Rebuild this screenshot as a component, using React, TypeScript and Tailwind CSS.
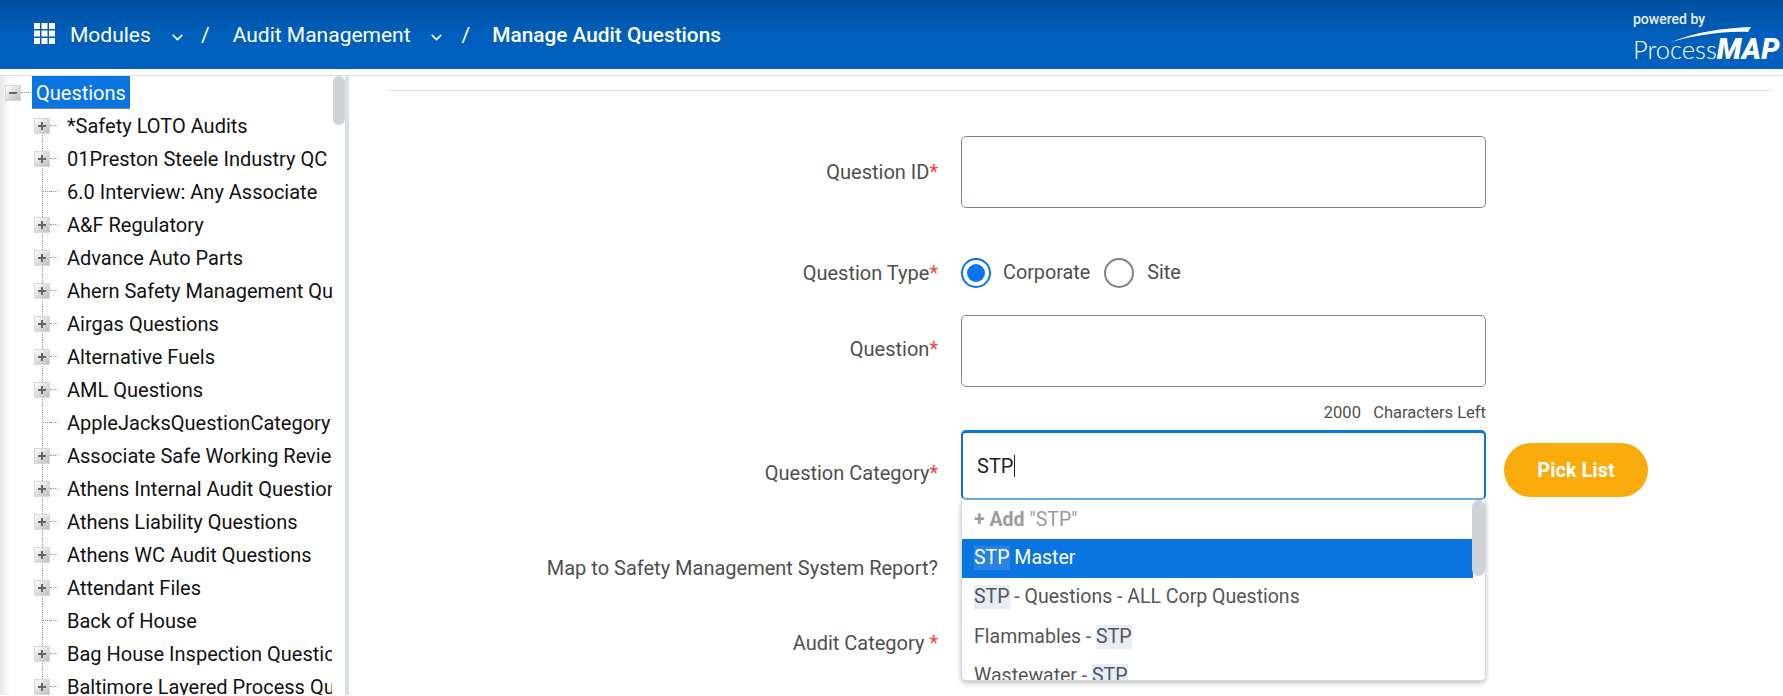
import React from "react";
import { ChevronDown } from "lucide-react";

const tree: [string, boolean][] = [
  ["*Safety LOTO Audits", true],
  ["01Preston Steele Industry QC", true],
  ["6.0 Interview: Any Associate", false],
  ["A&F Regulatory", true],
  ["Advance Auto Parts", true],
  ["Ahern Safety Management Questions", true],
  ["Airgas Questions", true],
  ["Alternative Fuels", true],
  ["AML Questions", true],
  ["AppleJacksQuestionCategory", false],
  ["Associate Safe Working Review", true],
  ["Athens Internal Audit Questions", true],
  ["Athens Liability Questions", true],
  ["Athens WC Audit Questions", true],
  ["Attendant Files", true],
  ["Back of House", false],
  ["Bag House Inspection Questions", true],
  ["Baltimore Layered Process Questions", true],
];

function Box({ minus }: { minus?: boolean }) {
  return (
    <span className="relative z-10 flex h-4 w-4 shrink-0 items-center justify-center border border-[#d8d8d8] bg-gradient-to-br from-white to-[#bdbdbd]">
      <span className="absolute h-[2px] w-2 bg-[#666]" />
      {!minus && <span className="absolute h-2 w-[2px] bg-[#666]" />}
    </span>
  );
}

function TreeRow({ label, expandable, first }: { label: string; expandable: boolean; first: boolean }) {
  return (
    <div className="flex h-[33px] items-center pl-[34px]">
      <span className="relative flex h-full w-4 shrink-0 items-center">
        <span className={`absolute bottom-0 left-[8px] w-0 border-l border-dotted border-[#999] ${first ? "top-1/2" : "top-0"}`} />
        {expandable ? <Box /> : <span className="ml-[8px] w-2 border-t border-dotted border-[#999]" />}
      </span>
      <span className="w-2 shrink-0 border-t border-dotted border-[#999]" />
      <span className="mt-[2px] ml-[9px] overflow-hidden whitespace-nowrap text-[20px] leading-[31px] text-[#111]">{label}</span>
    </div>
  );
}

function Label({ children, star = true, className = "" }: { children: React.ReactNode; star?: boolean; className?: string }) {
  return (
    <div className={`w-[589px] shrink-0 text-right text-[20px] leading-[28px] text-[#4f4f4f] ${className}`}>
      {children}
      {star && <span className="text-[#f44336]">*</span>}
    </div>
  );
}

function Hl({ children, active }: { children: React.ReactNode; active?: boolean }) {
  return <span className={`leading-[24px] ${active ? "bg-[#2a82e4]" : "bg-[#e6edf7]"}`}>{children}</span>;
}

export default function App() {
  return (
    <div className="h-[696px] w-[1783px] overflow-hidden bg-white font-['Roboto',sans-serif]">
      <header className="flex h-[69px] items-center bg-gradient-to-b from-[#00509f] via-[#005fbb] to-[#0060be] pl-[34px] text-white">
        <svg width="21" height="21" viewBox="0 0 21 21" fill="#fff" className="mb-[2px] shrink-0">
          {[0, 7.5, 15].map((y) =>
            [0, 7.5, 15].map((x) => <rect key={`${x}-${y}`} x={x} y={y} width="6" height="6" />)
          )}
        </svg>
        <span className="mt-[3px] ml-[15px] w-[92px] text-[21px]">Modules</span>
        <ChevronDown size={17} strokeWidth={2.25} className="mt-[6px] ml-[7px] shrink-0" />
        <span className="mt-[3px] ml-[15px] text-[21px]">/</span>
        <span className="mt-[3px] ml-[23px] text-[21px]">Audit Management</span>
        <ChevronDown size={17} strokeWidth={2.25} className="mt-[6px] ml-[17px] shrink-0" />
        <span className="mt-[3px] ml-[17px] text-[21px]">/</span>
        <span className="mt-[3px] ml-[22px] text-[20.8px] font-medium">Manage Audit Questions</span>
        <div className="ml-auto mr-[5px] flex w-[145px] flex-col self-stretch pt-[10px]">
          <span className="text-[14px] font-medium leading-[18px] text-[#e8f0fa]">powered by</span>
          <div className="relative mt-[5px] flex h-[28px] items-end leading-[24px]">
            <span className="font-['Lato',sans-serif] text-[25.5px] font-light">Process</span>
            <span className="text-[29px] font-black italic tracking-[0.2px]">MAP</span>
            <svg width="100" height="20" viewBox="0 0 100 20" className="absolute -top-[7px] left-[36px]">
              <path d="M0 17 C25 6 55 2 82 1 L79 6 C55 5 25 9 0 17Z" fill="#fff" />
            </svg>
          </div>
        </div>
      </header>

      <div className="mt-[6px] flex">
        <aside className="h-[620px] w-[349px] shrink-0 overflow-hidden border-t border-r-[4px] border-[#d6dfea] bg-gradient-to-r from-[#e6e6e6] via-white via-[3%] to-white">
          <div className="relative h-full">
            <div className="h-full w-[332px] overflow-hidden">
              <div className="flex h-[33px] items-center pl-[5px]">
                <Box minus />
                <span className="w-2 shrink-0 border-t border-dotted border-[#999]" />
                <span className="ml-[3px] flex h-[33px] items-center border-b border-[#7f8a99] bg-[#0a75e0] px-[4px] pt-[2px] text-[20px] text-white">Questions</span>
              </div>
              {tree.map(([label, exp], i) => (
                <TreeRow key={label} label={label} expandable={exp} first={i === 0} />
              ))}
            </div>
            <div className="absolute top-0 right-0 h-[49px] w-[12px] rounded-full bg-[#ced3d8]" />
          </div>
        </aside>

        <main className="flex-1 border-t border-[#d6dfea] pr-[12px] pl-[38px]">
          <div className="mt-[14px] h-px bg-[#dfe3e8]" />
          <div className="-mr-[12px] -ml-[38px]">
            <div className="mt-[45px] flex items-center">
              <Label>Question ID</Label>
              <div className="ml-[23px] h-[72px] w-[525px] rounded-[5px] border border-[#7c8594]" />
            </div>
            <div className="mt-[50px] flex h-[30px] items-center">
              <Label>Question Type</Label>
              <div className="ml-[23px] flex items-center">
                <span className="flex h-[30px] w-[30px] items-center justify-center rounded-full border-2 border-[#0a75e0]">
                  <span className="h-[18px] w-[18px] rounded-full bg-[#0a75f0]" />
                </span>
                <span className="ml-[12px] text-[19.8px] text-[#4f4f4f]">Corporate</span>
                <span className="ml-[14px] h-[30px] w-[30px] rounded-full border-2 border-[#808080]" />
                <span className="ml-[13px] text-[19.8px] text-[#4f4f4f]">Site</span>
              </div>
            </div>
            <div className="mt-[27px] flex items-start">
              <Label className="pt-[20px]">Question</Label>
              <div className="ml-[23px] h-[72px] w-[525px] rounded-[5px] border border-[#7c8594]" />
            </div>
            <div className="mt-[15px] flex h-[22px] items-center">
              <div className="ml-[612px] w-[525px] text-right text-[16.5px] text-[#4f4f4f]">
                2000&nbsp;&nbsp;&nbsp;Characters Left
              </div>
            </div>
            <div className="mt-[6px] flex items-start">
              <Label className="pt-[29px]">Question Category</Label>
              <div className="relative ml-[23px] w-[525px]">
                <div className="flex h-[70px] items-center rounded-[5px] border-2 border-t-[3px] border-[#0a75e0] border-b-[#6daeee] pl-[14px] text-[20px] text-[#222]">
                  STP<span className="ml-[1px] h-[22px] w-px bg-[#222]" />
                </div>
                <div className="absolute top-[70px] left-0 z-20 h-[181px] w-[525px] overflow-hidden rounded-b-[5px] border-x border-b border-[#d8d8d8] bg-white shadow-[0_2px_5px_rgba(0,0,0,0.25)]">
                  <div className="h-full w-[511px] text-[19.5px] text-[#555]">
                    <div className="flex h-[39px] items-center pl-[12px] text-[#9b9b9b]"><b className="font-bold">+ Add</b><span className="ml-[5px]">"STP"</span></div>
                    <div className="flex h-[39px] items-center bg-[#0a75e0] pb-[1px] pl-[12px] text-white"><Hl active>STP</Hl><span className="whitespace-pre"> Master</span></div>
                    <div className="flex h-[39px] items-center pb-[1px] pl-[12px]"><Hl>STP</Hl><span className="whitespace-pre"> - Questions - ALL Corp Questions</span></div>
                    <div className="flex h-[39px] items-center pl-[12px]"><span className="whitespace-pre">Flammables - </span><Hl>STP</Hl></div>
                    <div className="flex h-[39px] items-center pl-[12px]"><span className="whitespace-pre">Wastewater - </span><Hl>STP</Hl></div>
                  </div>
                  <div className="absolute top-0 right-0 h-[76px] w-[13px] rounded-full bg-[#ced3d8]" />
                </div>
              </div>
              <button className="mt-[13px] ml-[18px] h-[54px] w-[144px] rounded-full bg-[#f9ab0b] text-[20px] font-bold text-white">Pick List</button>
            </div>
            <div className="mt-[53px] flex h-[30px] items-center">
              <Label star={false}>Map to Safety Management System Report?</Label>
            </div>
            <div className="mt-[45px] flex h-[30px] items-center">
              <Label star={false}>Audit Category <span className="text-[#f44336]">*</span></Label>
            </div>
          </div>
        </main>
      </div>
    </div>
  );
}
